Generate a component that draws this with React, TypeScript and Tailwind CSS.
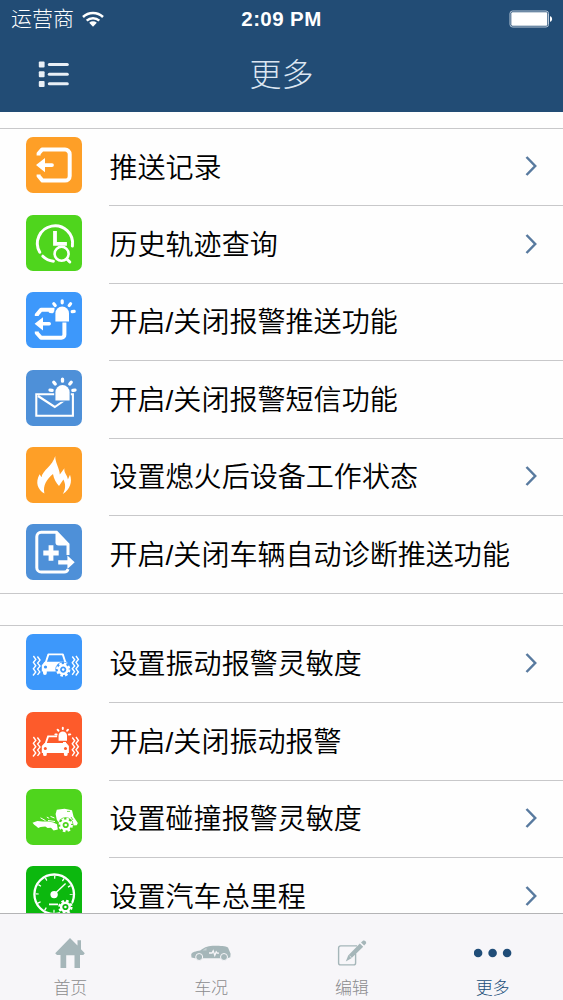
import React from 'react';

interface MenuItem {
  label: string;
  color: string;
  icon: React.ReactNode;
  link?: boolean;
}

interface PointProps {
  x: number;
  y: number;
}

// Toothed wheel with a gap in the tile's colour around it
const Gear: React.FC<PointProps & { bg: string }> = ({ x, y, bg }) => (
  <g transform={`translate(${x} ${y})`}>
    <circle r="7.8" fill={bg} />
    <circle r="6.1" fill="none" stroke="white" strokeWidth="2.2" strokeDasharray="2.6 2.19" />
    <circle r="4.3" fill="none" stroke="white" strokeWidth="2.4" />
    <circle r="1.3" fill="white" />
  </g>
);

const Siren: React.FC<PointProps & { scale?: number; bg: string }> = ({ x, y, scale = 1, bg }) => (
  <g transform={`translate(${x} ${y}) scale(${scale})`}>
    <path d="M-8 8.5V-1a8 8 0 0 1 16 0v9.5z" fill={bg} />
    <path d="M-6.8 7.5V-.6a6.8 6.8 0 0 1 13.6 0v8.1z" fill="white" />
    <path
      d="M0-13.2v2M-8.4-10.2l1.4 1.7M8.4-10.2l-1.4 1.7M-12-2.6l2 .3M12-2.6l-2 .3"
      stroke="white"
      strokeWidth="3.2"
      strokeLinecap="round"
    />
  </g>
);

const Shake: React.FC<{ y: number }> = ({ y }) => (
  <path
    transform={`translate(0 ${y})`}
    d="M7.4 0l2.4 3.4-2.4 3 2.4 3.4-2.4 3 2.4 3.2L7 19.5M11.4.5l2.6 3.6-2.4 3 2.4 3-2.4 3 2.2 2.8-2.3 3M46.3.5l2.4 3.3-2.4 3 2.4 3.2-2.4 2.8 2.2 2.8-2.3 3.2M50 0l2.4 3.4-2.4 3 2.4 3.4-2.4 3 2.4 3.2-2.6 3.5"
    fill="none"
    stroke="white"
    strokeWidth="1.4"
  />
);

const PushIcon = (
  <>
    <path
      d="M12.6 18.5V16.5L16 12.6h23a4.7 4.7 0 0 1 4.7 4.7v21.6a4.7 4.7 0 0 1-4.7 4.7H16.5L12.6 39v-1.5"
      fill="none"
      stroke="white"
      strokeWidth="4"
      strokeLinejoin="round"
    />
    <path d="M10 28.1l9-7.2v5.3h7a1.9 1.9 0 0 1 0 3.8h-7v5.3z" fill="white" />
  </>
);

const HistoryIcon = (
  <g fill="none" stroke="white" strokeLinecap="round">
    <path d="M13.8 37.3A17.6 17.6 0 1 1 46.4 31" strokeWidth="3" />
    <path d="M16.8 41.2a17.6 17.6 0 0 0 10.6 5" strokeWidth="3" />
    <path d="M29 18v10.8h10" strokeWidth="3.8" strokeLinecap="square" />
    <circle cx="35.6" cy="38.8" r="7" strokeWidth="2.6" />
    <path d="M40.8 44l3 3" strokeWidth="3" />
  </g>
);

const AlarmPushIcon = (
  <>
    <path
      d="M10.8 24v-1.2L15 17.7h13.5M38.4 30v12.8a3 3 0 0 1-3 3H15L10.8 41v-1.5"
      fill="none"
      stroke="white"
      strokeWidth="4"
      strokeLinejoin="round"
    />
    <path d="M8.6 31.8l8.4-6.6v4.8h6.2a1.8 1.8 0 0 1 0 3.6H17v4.8z" fill="white" />
    <Siren x={36.2} y={22} bg="#3d98fb" />
  </>
);

const AlarmSmsIcon = (
  <>
    <path d="M10.3 24.3h36.6v21.4H10.3zM12 26l16.8 11L44 26.5" fill="none" stroke="white" strokeWidth="2.1" />
    <Siren x={36.5} y={22.8} bg="#4e90d8" scale={1.04} />
  </>
);

const FlameIcon = (
  <path
    d="M18.4 46.5C11.6 42.5 9 35.5 13.6 27.2l1.9 3C16.4 23.6 26.8 18.5 29.2 9c.1 7.5 4.5 12.6 4.6 18.4l4.6-6.2c-.7 4.4 2.8 6.4 3.5 11.2l2.1-4.7c2.5 7.2.2 14.7-7.2 19.2 2.7-4.4 3.2-9.2.6-14.4l-4.4 6.4c-2.8-2.8-5.2-6.8-6-11.9C20.5 32.5 16.8 38.5 18.4 46.5z"
    fill="white"
  />
);

const DiagnoseIcon = (
  <>
    <path
      d="M42 31V20.4L30.5 8.3H15.2a4.4 4.4 0 0 0-4.4 4.4v31a4.4 4.4 0 0 0 4.4 4.4H38a4 4 0 0 0 4-3"
      fill="none"
      stroke="white"
      strokeWidth="3"
    />
    <path d="M29.5 7.5V18.5a3 3 0 0 0 3 3h10.5z" fill="white" />
    <path d="M25 21.3v15.4M17.3 29h15.4" stroke="white" strokeWidth="4.8" />
    <path d="M32.2 36.2h9.2v-4.6l7.3 6.7-7.3 6.7v-4.6h-9.2z" fill="white" />
  </>
);

const ShakeLevelIcon = (
  <>
    <Shake y={22} />
    <path d="M19.6 29l2.8-8.6h14.4l2.8 8.6" fill="none" stroke="white" strokeWidth="1.9" strokeLinejoin="round" />
    <path
      d="M18.5 27.8h22.2l2 3v6.7H38v1.2a1.8 1.8 0 0 1-3.6 0v-1.2H20.8v1.6a1.9 1.9 0 0 1-3.8 0v-1.6h-1.2v-6.2z"
      fill="white"
    />
    <circle cx="19.5" cy="33" r="1.6" fill="#3d98fb" />
    <Gear x={37.2} y={35.6} bg="#3d98fb" />
  </>
);

const ShakeAlarmIcon = (
  <>
    <Shake y={25} />
    <path d="M19.5 32l2.6-7.6h9M37 31h3" fill="none" stroke="white" strokeWidth="1.9" />
    <path
      d="M18.6 31h21.8l2.5 3v7h-1.2v1.2a1.9 1.9 0 0 1-3.8 0V41H20.8v1.2a1.9 1.9 0 0 1-3.8 0V41h-1.2v-7z"
      fill="white"
    />
    <circle cx="19.3" cy="36.4" r="1.5" fill="#fd5b2b" />
    <circle cx="39.5" cy="36.4" r="1.5" fill="#fd5b2b" />
    <Siren x={36.8} y={24} bg="#fd5b2b" scale={0.62} />
  </>
);

const CrashIcon = (
  <>
    <path
      d="M6.5 33.8l4.8-1.7 5.4.5 6-.2 4.6 1.2 3.7 1.6.8 5.2-4.2 1-2.6-2.6-3.4.2-2.3-1.5-4.8.4-2.3 1.2-1.6-1.7-2.4-1.6z"
      fill="white"
    />
    <path d="M14.5 28.8l5 2.8M20.8 28l2.4 1.4M24.5 27.4l4 1.6M22 31.5l7 1" stroke="white" strokeWidth="1" />
    <path d="M29.6 25l1.2-4.2 7.7-1 7.5 1.4 1.6 6.6 4.2 6.2-1 2.2-9 .5-9-3-2-3z" fill="white" />
    <path d="M41 22.4h3M45 28l2 3" stroke="#4fd51d" strokeWidth=".8" />
    <Gear x={39.7} y={36} bg="#4fd51d" />
  </>
);

const MileageIcon = (
  <>
    <circle cx="28.2" cy="28.3" r="19.8" fill="none" stroke="white" strokeWidth="2.3" />
    <circle
      cx="28.2"
      cy="28.3"
      r="17"
      fill="none"
      stroke="white"
      strokeWidth="3"
      strokeDasharray="1.3 7.6"
      strokeDashoffset=".6"
    />
    <path d="M28 28.5L39.6 17.4" stroke="white" strokeWidth="1.4" />
    <circle cx="28.1" cy="28.6" r="3.7" fill="white" />
    <path d="M23 38.3h9" stroke="white" strokeWidth="1.8" />
    <Gear x={39.4} y={41} bg="#0cb80e" />
  </>
);

const pushItems: MenuItem[] = [
  { label: '推送记录', color: 'bg-[#fe9f27]', icon: PushIcon, link: true },
  { label: '历史轨迹查询', color: 'bg-[#4fd51d]', icon: HistoryIcon, link: true },
  { label: '开启/关闭报警推送功能', color: 'bg-[#3d98fb]', icon: AlarmPushIcon },
  { label: '开启/关闭报警短信功能', color: 'bg-[#4e90d8]', icon: AlarmSmsIcon },
  { label: '设置熄火后设备工作状态', color: 'bg-[#fe9f27]', icon: FlameIcon, link: true },
  { label: '开启/关闭车辆自动诊断推送功能', color: 'bg-[#4e90d8]', icon: DiagnoseIcon },
];

const alarmItems: MenuItem[] = [
  { label: '设置振动报警灵敏度', color: 'bg-[#3d98fb]', icon: ShakeLevelIcon, link: true },
  { label: '开启/关闭振动报警', color: 'bg-[#fd5b2b]', icon: ShakeAlarmIcon },
  { label: '设置碰撞报警灵敏度', color: 'bg-[#4fd51d]', icon: CrashIcon, link: true },
  { label: '设置汽车总里程', color: 'bg-[#0cb80e]', icon: MileageIcon, link: true },
];

const MenuGroup: React.FC<{ items: MenuItem[] }> = ({ items }) => (
  <div className="border-y border-[#c8c8ca]">
    {items.map((item, index) => (
      <div key={item.label} className="flex h-[77.4px] pl-[26.4px]">
        <div className={`mt-[8.4px] size-14 shrink-0 overflow-hidden rounded-[7px] ${item.color}`}>
          <svg viewBox="0 0 56 56" className="size-14">
            {item.icon}
          </svg>
        </div>
        <div
          className={`ml-[26.6px] flex flex-1 items-center justify-between pr-[26px] ${
            index < items.length - 1 ? 'border-b border-[#c8c8ca]' : ''
          }`}
        >
          <span className="pt-[3px] pl-[0.5px] text-[28.05px] font-[350] whitespace-nowrap text-black">
            {item.label}
          </span>
          {item.link && (
            <svg viewBox="0 0 12 20" className="-mt-0.5 h-5 w-3">
              <path d="M1.5 1l8.7 9-8.7 9" fill="none" stroke="#587a9f" strokeWidth="2.5" />
            </svg>
          )}
        </div>
      </div>
    ))}
  </div>
);

const HomeIcon = (
  <svg viewBox="0 0 30 30" className="h-[30px] w-[30px]" fill="#a5b6b9">
    <path d="M15 0l7.5 7.6V2.2H26v9l3.8 4-1.5 1.8H25v13h-5.5V17.3h-8.3V30H5.5V17H2L.2 15.2z" />
  </svg>
);

const CarIcon = (
  <svg viewBox="0 0 40 16" className="h-4 w-10">
    <path
      d="M.5 12.5L.2 9.5C1 7 5 6.4 9.2 5.6 14 1.6 18 .7 23.5.7c6 0 11 .2 13.5 1.8l2.6 6.2-.3 3.6-3 1H4z"
      fill="#a5b6b9"
    />
    <circle cx="8.2" cy="12" r="3.5" fill="#a5b6b9" stroke="#f7f6f9" strokeWidth="1" />
    <circle cx="33" cy="12" r="3.5" fill="#a5b6b9" stroke="#f7f6f9" strokeWidth="1" />
    <path d="M11.5 5.6l4-2.8v2.8z" fill="#c6d0d3" />
    <path d="M18 8h3l1.2-2.2 1.6 4.6 1.4-3.6 1 1.4H28" fill="none" stroke="#f7f6f9" strokeWidth="1.3" />
  </svg>
);

const EditIcon = (
  <svg viewBox="0 0 30 26" className="h-[26px] w-[30px]">
    <path
      d="M20 5.9H3.6a2 2 0 0 0-2 2v15a2 2 0 0 0 2 2h13a2 2 0 0 0 2-2v-9.5"
      fill="none"
      stroke="#a5b6b9"
      strokeWidth="1.4"
    />
    <path d="M8.8 21.6l2.4-6.2L22.8 3.6l3.4 3.1-11.8 11.6zM24 2.6L26.2.5c1.7-.4 3.2.9 3 2.8l-2 2.2z" fill="#a5b6b9" />
    <path d="M12.6 16l2 1.8" stroke="#f7f6f9" strokeWidth=".8" />
  </svg>
);

const MoreIcon = (
  <svg viewBox="0 0 38 10" className="h-2.5 w-[38px]" fill="#204d78">
    <circle cx="4.1" cy="5" r="4.3" />
    <circle cx="18.6" cy="5" r="4.3" />
    <circle cx="33.1" cy="5" r="4.3" />
  </svg>
);

const tabs = [
  { label: '首页', icon: HomeIcon },
  { label: '车况', icon: CarIcon },
  { label: '编辑', icon: EditIcon },
  { label: '更多', icon: MoreIcon, active: true },
];

export default function App() {
  return (
    <div className="flex h-[1000px] w-[563px] flex-col overflow-hidden bg-[#fefefe] font-['Liberation_Sans','Noto_Sans_CJK_SC',sans-serif]">
      {/* Header */}
      <header className="h-28 shrink-0 bg-[#224c75]">
        <div className="grid h-9 grid-cols-3 items-center px-[11px] text-white">
          <div className="flex items-center gap-2">
            <span className="pt-px text-[21px] leading-9 font-light">运营商</span>
            <svg viewBox="0 0 22 16" className="h-4 w-[22px]">
              <path d="M1 6a14.5 14.5 0 0 1 20 0M4.7 9.6a9.3 9.3 0 0 1 12.6 0" fill="none" stroke="white" strokeWidth="2.5" />
              <path d="M11 15.8l-3.8-4a5.6 5.6 0 0 1 7.6 0z" fill="white" />
            </svg>
          </div>
          <span className="text-center text-[20.5px] leading-9 font-bold tracking-[0.4px]">2:09 PM</span>
          <svg viewBox="0 0 44 18" className="-mr-px h-[18px] w-11 justify-self-end">
            <rect x="1" y="1" width="38.5" height="16" rx="2.5" fill="none" stroke="#b9c8d8" strokeWidth="1" />
            <rect x="2.3" y="2.3" width="36" height="13.4" rx="1.2" fill="white" />
            <path d="M41 6.2c2.8.5 2.8 5.1 0 5.6z" fill="white" />
          </svg>
        </div>
        <div className="grid h-[76px] grid-cols-3 items-center px-[38px]">
          <svg viewBox="0 0 31 27" className="h-[27px] w-[31px]" fill="#e9eff6">
            <rect x=".8" y=".5" width="5.8" height="6" rx="1" />
            <rect x=".8" y="10.2" width="5.8" height="6" rx="1" />
            <rect x=".8" y="19.9" width="5.8" height="6" rx="1" />
            <rect x="9.8" y="2" width="21" height="3" rx="1.5" />
            <rect x="9.8" y="11.7" width="21" height="3" rx="1.5" />
            <rect x="9.8" y="21.2" width="21" height="3" rx="1.5" />
          </svg>
          <h1 className="pt-0.5 text-center text-[32px] leading-[74px] font-light text-[#dce6f2]">更多</h1>
        </div>
      </header>

      {/* Settings list */}
      <main className="flex min-h-0 flex-1 flex-col gap-[30.4px] overflow-hidden pt-4">
        <MenuGroup items={pushItems} />
        <MenuGroup items={alarmItems} />
      </main>

      {/* Tab bar */}
      <nav className="grid h-[87px] shrink-0 grid-cols-4 border-t border-[#b4b4b6] bg-[#f7f6f9]">
        {tabs.map((tab) => (
          <div key={tab.label} className="flex flex-col items-center pt-[23px]">
            <div className="flex h-8 items-center">{tab.icon}</div>
            <span
              className={`mt-2 text-[17px] leading-6 font-light ${tab.active ? 'text-[#204d78]' : 'text-[#8c8c8e]'}`}
            >
              {tab.label}
            </span>
          </div>
        ))}
      </nav>
    </div>
  );
}
